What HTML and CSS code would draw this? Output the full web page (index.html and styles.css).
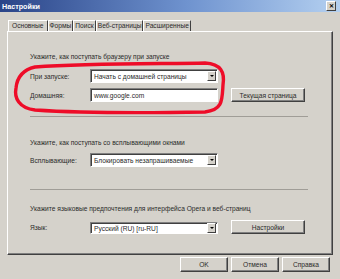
FILE: index.html
```html
<!DOCTYPE html>
<html lang="ru">
<head>
    <meta charset="UTF-8">
    <title>Настройки</title>
    <link rel="stylesheet" href="styles.css">
</head>
<body>
    <div class="dialog">
        <div class="titlebar">
            <span class="title">Настройки</span>
            <span class="close">&#x2715;</span>
        </div>
        <div class="tabs">
            <span class="tab active">Основные</span>
            <span class="tab">Формы</span>
            <span class="tab">Поиск</span>
            <span class="tab">Веб-страницы</span>
            <span class="tab">Расширенные</span>
        </div>
        <div class="panel">
            <div class="group first">
                <p class="caption">Укажите, как поступать браузеру при запуске</p>
                <div class="row">
                    <span class="label">При запуске:</span>
                    <div class="select"><span>Начать с домашней страницы</span><i class="arrow"></i></div>
                </div>
                <div class="row">
                    <span class="label">Домашняя:</span>
                    <div class="input">www.google.com</div>
                    <button class="btn wide">Текущая страница</button>
                </div>
            </div>
            <div class="group second">
                <p class="caption">Укажите, как поступать со всплывающими окнами</p>
                <div class="row">
                    <span class="label">Всплывающие:</span>
                    <div class="select"><span>Блокировать незапрашиваемые</span><i class="arrow"></i></div>
                </div>
            </div>
            <div class="group third">
                <p class="caption">Укажите языковые предпочтения для интерфейса Opera и веб-страниц</p>
                <div class="row lang">
                    <span class="label">Язык:</span>
                    <div class="select"><span>Русский (RU) [ru-RU]</span><i class="arrow"></i></div>
                    <button class="btn wide">Настройки</button>
                </div>
            </div>
            <svg class="mark" width="340" height="279" viewBox="0 0 340 279">
                <path d="M35,67 C90,63 170,64 205,63 C221,64 225,72 223,85 C222,100 223,110 205,112 C150,113 80,113 35,110 C19,108 14,98 16,88 C17,78 22,70 35,67 Z" fill="none" stroke="#ee0c28" stroke-width="3.4"/>
            </svg>
        </div>
        <div class="actions">
            <button class="btn">OK</button>
            <button class="btn">Отмена</button>
            <button class="btn">Справка</button>
        </div>
    </div>
</body>
</html>
```

FILE: styles.css
```css
body {
    margin: 0;
    padding: 0;
    background-color: #d5d2cb;
    font-family: "Liberation Sans", Arial, sans-serif;
    font-size: 6.65px;
    color: #2a2a2a;
}
.dialog {
    position: relative;
    width: 340px;
    height: 279px;
    overflow: hidden;
}
.titlebar {
    height: 12px;
    display: flex;
    align-items: center;
    justify-content: space-between;
    padding: 0 4px 0 2px;
    background: linear-gradient(to right, #2a4488, #6f93cf 55%, #b4d0f0);
}
.title {
    color: #fff;
    font-weight: bold;
    font-size: 7.2px;
}
.close {
    width: 8px;
    height: 8px;
    background: #d5d2cb;
    border: 1px solid;
    border-color: #fff #404040 #404040 #fff;
    font-size: 6px;
    line-height: 8px;
    text-align: center;
    color: #000;
    font-weight: bold;
}
.tabs {
    display: flex;
    margin: 8px 0 0 8px;
    height: 11px;
}
.tab {
    padding: 0 1px;
    line-height: 10px;
    border-top: 1px solid #fff;
    border-left: 1px solid #fff;
    border-right: 1px solid #404040;
}
.tab.active {
    padding: 0 3px;
}
.panel {
    position: relative;
    margin: 0 7px;
    height: 222px;
    border: 1px solid;
    border-color: #fff #404040 #404040 #fff;
    box-shadow: inset -1px -1px #808080;
}
.group {
    margin-left: 22px;
    width: 278px;
}
.group.first {
    padding-top: 20px;
    padding-bottom: 14px;
    border-bottom: 1px solid #a09d97;
}
.group.second {
    padding-top: 21px;
    padding-bottom: 22px;
    border-bottom: 1px solid #a09d97;
}
.group.third {
    padding-top: 14px;
}
.caption {
    margin: 0 0 7px 0;
    line-height: 10px;
}
.second .caption {
    margin-bottom: 5px;
}
.third .caption {
    margin-bottom: 6px;
}
.row {
    display: flex;
    align-items: center;
    height: 14px;
    margin-bottom: 5px;
}
.row:last-child {
    margin-bottom: 0;
}
.label {
    width: 60px;
}
.select, .input {
    display: flex;
    align-items: center;
    justify-content: space-between;
    box-sizing: border-box;
    width: 128px;
    height: 14px;
    background: #fff;
    border: 1px solid;
    border-color: #808080 #fff #fff #808080;
    box-shadow: inset 1px 1px #404040;
    padding: 0 1px 0 3px;
}
.lang .select {
    height: 12px;
    margin-top: 2px;
}
.arrow {
    width: 9px;
    height: 10px;
    box-sizing: border-box;
    background: #d5d2cb;
    border: 1px solid;
    border-color: #fff #404040 #404040 #fff;
    position: relative;
}
.arrow::after {
    content: "";
    position: absolute;
    left: 2px;
    top: 3px;
    border-left: 2px solid transparent;
    border-right: 2px solid transparent;
    border-top: 2px solid #000;
}
.btn {
    box-sizing: border-box;
    height: 14px;
    padding: 0;
    background: #d5d2cb;
    border: 1px solid;
    border-color: #fff #404040 #404040 #fff;
    box-shadow: inset -1px -1px #808080;
    font-family: "Liberation Sans", Arial, sans-serif;
    font-size: 6.65px;
    color: #2a2a2a;
}
.btn.wide {
    width: 74px;
    margin-left: 13px;
}
.actions {
    display: flex;
    justify-content: flex-end;
    gap: 3px;
    margin: 2px 10px 0 0;
}
.actions .btn {
    width: 48px;
    height: 15px;
}
.mark {
    position: absolute;
    left: -8px;
    top: -32px;
    pointer-events: none;
}
```
